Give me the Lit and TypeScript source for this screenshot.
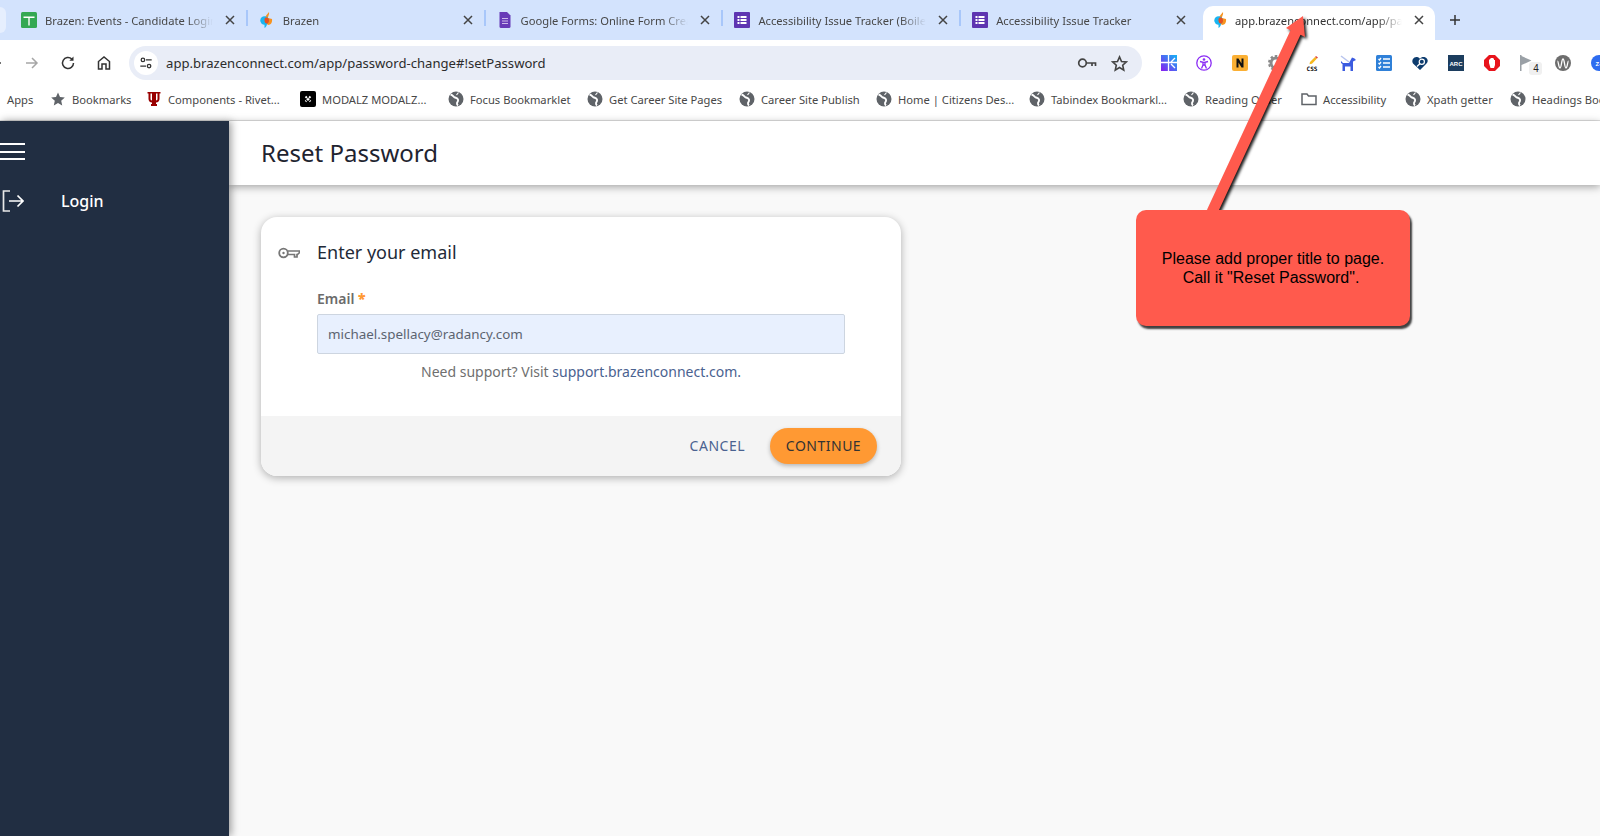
import { LitElement, css, html } from 'lit'
import { customElement } from 'lit/decorators.js'

const globe = html`<svg class="ico" viewBox="0 0 16 16"><circle cx="8" cy="8" r="7.500" fill="#5f6368"/><path d="M2.500 3.500C5 4 5.500 6 7 6.500s2.500.5 3 2-.5 2.500-1 3.500c-.2.800.2 1.800 1 2.500" fill="none" stroke="#fff" stroke-width="1.900"/><path d="M10.500 1.500 8.500 4" stroke="#fff" stroke-width="1.200"/></svg>`
const brazen = html`<svg class="ico" viewBox="0 0 16 16"><path d="M10 0c.5 3-1 3.500-1 6l4 1c.5 3-1 6-4 6L5 9c0-4 3-6 5-9Z" fill="#f7931e"/><circle cx="5.500" cy="8.500" r="4.200" fill="#19b5f1"/><path d="M6 6c2-1 4 0 4 2.500S8.500 12 7 11.500 5 7 6 6Z" fill="#e8501f"/><path d="M5.500 11c1 0 2 .5 2.500 1.500-.5 2-1.500 3-2.500 3.500Z" fill="#19b5f1"/></svg>`
const sheets = html`<svg class="ico" viewBox="0 0 16 16"><rect width="16" height="16" rx="1.500" fill="#34a853"/><path d="M2.500 4.500h11v1.400H8.700v7.600H7.300V5.900H2.500Z" fill="#fff"/></svg>`
const forms = html`<svg class="ico" viewBox="0 0 16 16"><path d="M2.500 0H10l3.500 3.500V14.500a1.500 1.500 0 0 1-1.500 1.500H4a1.500 1.500 0 0 1-1.500-1.500Z" fill="#673ab7"/><path d="M5 6.500h6M5 9h6M5 11.500h6" stroke="#cdb9ea" stroke-width="1.200"/></svg>`
const tracker = html`<svg class="ico" viewBox="0 0 16 16"><rect width="16" height="16" rx="1" fill="#5e35b1"/><path d="M3.500 4h2v2h-2ZM3.500 7h2v2h-2ZM3.500 10h2v2h-2ZM6.500 4h6v2h-6ZM6.500 7h6v2h-6ZM6.500 10h6v2h-6Z" fill="#fff"/></svg>`
const close = html`<svg class="close" viewBox="0 0 10 10"><path d="M1 1l8 8M9 1l-8 8" stroke="currentColor" stroke-width="1.500"/></svg>`

const tabs = [
  { icon: sheets, title: 'Brazen: Events - Candidate Login' },
  { icon: brazen, title: 'Brazen' },
  { icon: forms, title: 'Google Forms: Online Form Creator' },
  { icon: tracker, title: 'Accessibility Issue Tracker (Boilerplate)' },
  { icon: tracker, title: 'Accessibility Issue Tracker' },
]

const iu = html`<svg class="ico" viewBox="0 0 16 16"><path d="M1.500 1h4v1.500h-1V8c0 .8.500 1.300 1.500 1.400V2.500H5.500V1h5v1.500H10v6.900c1-.1 1.500-.6 1.500-1.400V2.500h-1V1h4v1.500h-1V8c0 2-1.300 3.300-3.500 3.500v1.500h1V15H5v-2h1v-1.500C3.800 11.300 2.500 10 2.500 8V2.500h-1Z" fill="#990000"/></svg>`
const modalz = html`<svg class="ico" viewBox="0 0 16 16"><rect width="16" height="16" rx="2" fill="#000"/><path d="M5.500 5.500l5 5M10.500 5.500l-5 5" stroke="#fff" stroke-width="2" stroke-dasharray="2 1"/></svg>`
const star = html`<svg class="ico" viewBox="0 0 16 16"><path d="M8 1.500l2 4.500 4.800.5-3.600 3.200 1 4.800L8 12.100 3.800 14.500l1-4.800L1.200 6.500 6 6Z" fill="#5f6368"/></svg>`
const folder = html`<svg class="ico" viewBox="0 0 16 16"><path d="M1 3h5l1.500 2H15v8.500H1Z" fill="none" stroke="#5f6368" stroke-width="1.500"/></svg>`

const bookmarks = [
  { width: 43, label: 'Apps' },
  { width: 96, icon: star, label: 'Bookmarks' },
  { width: 154, icon: iu, label: 'Components - Rivet...' },
  { width: 148, icon: modalz, label: 'MODALZ MODALZ...' },
  { width: 139, icon: globe, label: 'Focus Bookmarklet' },
  { width: 152, icon: globe, label: 'Get Career Site Pages' },
  { width: 137, icon: globe, label: 'Career Site Publish' },
  { width: 153, icon: globe, label: 'Home | Citizens Des...' },
  { width: 154, icon: globe, label: 'Tabindex Bookmarkl...' },
  { width: 118, icon: globe, label: 'Reading Order' },
  { width: 104, icon: folder, label: 'Accessibility' },
  { width: 105, icon: globe, label: 'Xpath getter' },
  { width: 120, icon: globe, label: 'Headings Bookmarklet' },
]

const extensions = [
  html`<svg viewBox="0 0 16 16"><defs><linearGradient id="g1" x1="0" y1="1" x2="1" y2="0"><stop offset="0" stop-color="#8a1df0"/><stop offset="1" stop-color="#12b5f5"/></linearGradient></defs><rect width="16" height="16" fill="url(#g1)"/><path d="M7.500 0v16M0 7.500h16M10 7l4-4M10 9l4 4" stroke="#fff" stroke-width="1.300"/></svg>`,
  html`<svg viewBox="0 0 16 16"><circle cx="8" cy="8" r="7.200" fill="#fff" stroke="#8b2cf5" stroke-width="1.300"/><circle cx="8" cy="4.500" r="1.300" fill="#8b2cf5"/><path d="M4 6.500l3 .8v2.700l-1.500 3.500M12 6.500l-3 .8v2.700l1.500 3.500M7 7.300h2V10H7Z" fill="none" stroke="#8b2cf5" stroke-width="1.300"/></svg>`,
  html`<svg viewBox="0 0 16 16"><rect width="16" height="16" rx="2" fill="#fbb034"/><path d="M4.500 12.500v-9h2l3 5v-5h2v9h-2l-3-5v5Z" fill="#111"/></svg>`,
  html`<svg viewBox="0 0 16 16"><circle cx="8" cy="8" r="5" fill="none" stroke="#8a8a8a" stroke-width="3"/><circle cx="8" cy="8" r="7" fill="none" stroke="#8a8a8a" stroke-width="2" stroke-dasharray="2.500 2"/></svg>`,
  html`<svg viewBox="0 0 16 16"><path d="M6 7l5-5 2 1.500-5 5.200-2.500.6Z" fill="#f5b81f"/><path d="M11 2l1-1 2 1.500-1 1Z" fill="#e0443e"/><text x="8" y="15.500" text-anchor="middle" class="css">CSS</text></svg>`,
  html`<svg viewBox="0 0 16 16"><path d="M1 1l8 6" stroke="#b8c4ee" stroke-width="1.500"/><path d="M1 6l2 2h6l3-5.500 2.500 1 1.500 1.500-3 1.500V16h-2.500v-4.500H5V16H2.500V9L1 8Z" fill="#3b5be0"/></svg>`,
  html`<svg viewBox="0 0 16 16"><rect width="16" height="16" rx="1.500" fill="#2f80d8"/><path d="M7 4h7M7 8h7M7 12h7M2.500 4l1 1 1.500-2M2.500 8l1 1 1.500-2M2.500 12l1 1 1.500-2" stroke="#fff" stroke-width="1.300" fill="none"/></svg>`,
  html`<svg viewBox="0 0 16 16"><path d="M8 15 1 8.500C-1 5 2 1.500 5 2c1.500.2 2.500 1 3 2 1-2 3.500-2.500 5.500-1.500 2.500 1.500 3 4 1 6Z" fill="#0d3c6e"/><circle cx="9.800" cy="6.800" r="2.600" fill="#0d3c6e" stroke="#fff" stroke-width="1.200"/><path d="M7.800 8.800 5 11.500" stroke="#fff" stroke-width="1.300"/></svg>`,
  html`<svg viewBox="0 0 16 16"><rect width="16" height="16" fill="#1c3d5e"/><text x="8" y="10.500" text-anchor="middle" class="arc">ARC</text></svg>`,
  html`<svg viewBox="0 0 16 16"><path d="M5 0h6l5 5v6l-5 5H5l-5-5V5Z" fill="#e8141c"/><path d="M5 8V4.500h1V3.500h1V3h2v.5h1V5h1v5l-1 3H6.500Z" fill="#fff"/></svg>`,
  html`<svg viewBox="0 0 16 16"><path d="M1 0h1.500v16H1ZM2.500 1l10 4.500-10 4.500Z" fill="#9aa0a6"/></svg><span class="ext-badge">4</span>`,
  html`<svg viewBox="0 0 16 16"><circle cx="8" cy="8" r="8" fill="#6d6d6d"/><path d="M2.500 6c1 0 1 7 2.500 7s1.500-9 3-9 1.500 9 3 9 1.500-7 2.500-7" fill="none" stroke="#fff" stroke-width="1.300"/></svg>`,
  html`<svg viewBox="0 0 16 16"><circle cx="8" cy="8" r="8" fill="#2d6cf0"/><text x="8" y="10.500" text-anchor="middle" class="arc">Z+</text></svg>`,
]

@customElement('app-root')
export class AppRoot extends LitElement {
  render() {
    return html`
      <div class="tabstrip">
        <div class="pill"></div>
        ${tabs.map((t) => html`
          <div class="tab">
            ${t.icon}
            <span class="tab-title">${t.title}</span>
            ${close}
          </div>
        `)}
        <div class="tab active">
          ${brazen}
          <span class="tab-title">app.brazenconnect.com/app/password-change</span>
          ${close}
        </div>
        <svg class="plus" viewBox="0 0 12 12"><path d="M6 1v10M1 6h10" stroke="#333" stroke-width="1.500"/></svg>
      </div>

      <div class="toolbar">
        <div class="nav">
          <svg viewBox="0 0 16 16"><path d="M14 8H3M8 3 3 8l5 5" fill="none" stroke="#444" stroke-width="1.500"/></svg>
        </div>
        <div class="nav">
          <svg viewBox="0 0 16 16"><path d="M2 8h11M8 3l5 5-5 5" fill="none" stroke="#a6a6a6" stroke-width="1.500"/></svg>
        </div>
        <div class="nav">
          <svg viewBox="0 0 16 16"><path d="M13.500 8A5.500 5.500 0 1 1 11.800 4" fill="none" stroke="#333" stroke-width="1.500"/><path d="M13.500 1.500v4.200H9.300Z" fill="#333"/></svg>
        </div>
        <div class="nav">
          <svg viewBox="0 0 16 16"><path d="M2.500 14V6.500L8 2l5.500 4.500V14H10V9H6v5Z" fill="none" stroke="#333" stroke-width="1.500"/></svg>
        </div>
        <div class="omnibox">
          <div class="site">
            <svg viewBox="0 0 16 16"><circle cx="4.500" cy="4.500" r="2" fill="none" stroke="#333" stroke-width="1.500"/><path d="M8 4.500h6.500M1.500 11.500H8" stroke="#333" stroke-width="1.500"/><circle cx="11.500" cy="11.500" r="2" fill="none" stroke="#333" stroke-width="1.500"/></svg>
          </div>
          <span class="url">app.brazenconnect.com/app/password-change#!setPassword</span>
          <svg class="omni-key" viewBox="0 0 20 12"><circle cx="5.500" cy="6" r="3.800" fill="none" stroke="#444" stroke-width="1.700"/><path d="M9 6h9.500v3M15 6v3" fill="none" stroke="#444" stroke-width="1.700"/></svg>
          <svg class="omni-star" viewBox="0 0 16 16"><path d="M8 1.800l1.900 4.300 4.600.4-3.500 3.100 1 4.600L8 11.800l-4 2.400 1-4.600L1.500 6.500l4.600-.4Z" fill="none" stroke="#444" stroke-width="1.500"/></svg>
        </div>
        <div class="extensions">
          ${extensions.map((e) => html`<div class="ext">${e}</div>`)}
        </div>
      </div>

      <div class="bookmarks">
        ${bookmarks.map((b) => html`
          <div class="bookmark" style="width:${b.width}px">
            ${b.icon ?? ''}
            <span>${b.label}</span>
          </div>
        `)}
      </div>

      <div class="app">
        <nav class="sidebar">
          <div class="burger"><span></span><span></span><span></span></div>
          <div class="nav-item">
            <svg viewBox="0 0 22 22"><path d="M8 1H1.500v20H8" fill="none" stroke="#e8e8e8" stroke-width="1.700"/><path d="M7 11h14M15.500 5.500 21 11l-5.500 5.500" fill="none" stroke="#fff" stroke-width="1.700"/></svg>
            <span>Login</span>
          </div>
        </nav>
        <main class="main">
          <header class="page-head"><h1>Reset Password</h1></header>
          <div class="content">
            <section class="card">
              <div class="card-body">
                <div class="card-title">
                  <svg viewBox="0 0 22 12"><circle cx="5.500" cy="6" r="4.300" fill="none" stroke="#777" stroke-width="1.800"/><circle cx="5.500" cy="6" r="1.200" fill="#777"/><path d="M10 4h11.500v1.500L19.500 7.500H19V10h-2.500V7.500H10" fill="none" stroke="#777" stroke-width="1.700"/></svg>
                  <h2>Enter your email</h2>
                </div>
                <div class="field">
                  <label for="email">Email <b>*</b></label>
                  <input id="email" type="text" value="michael.spellacy@radancy.com" />
                  <p class="help">Need support? Visit <a>support.brazenconnect.com.</a></p>
                </div>
              </div>
              <div class="card-foot">
                <button class="btn-cancel">CANCEL</button>
                <button class="btn-continue">CONTINUE</button>
              </div>
            </section>
          </div>
        </main>
      </div>

      <svg class="arrow" viewBox="0 0 1600 836">
        <path d="M1303 16 1305 37 1300.500 34.800 1217 214.300 1207 209.700 1290.500 30.200 1286 28Z" fill="#ff5a4d"/>
      </svg>
      <div class="callout"><span>Please add proper title to page.<br /><span class="nudge">Call it "Reset Password".</span></span></div>
    `
  }

  static styles = css`
    :host {
      display: block;
      position: relative;
      width: 1600px;
      height: 836px;
      overflow: hidden;
      background: #fff;
      font-family: "Noto Sans", sans-serif;
      color: #333;
    }

    .ico {
      width: 16px;
      height: 16px;
      flex: none;
    }

    /* tabs */
    .tabstrip {
      display: flex;
      align-items: flex-end;
      height: 40px;
      background: #d3e3fd;
    }

    .pill {
      width: 6px;
      height: 26px;
      margin: 0 4px 7px 0;
      background: #e6effe;
      border-radius: 0 8px 8px 0;
    }

    .tab {
      position: relative;
      display: flex;
      align-items: center;
      flex: none;
      box-sizing: border-box;
      width: 237.800px;
      height: 34px;
      padding: 0 13px 6px 11px;
      font-size: 11.200px;
      color: #474747;
    }

    .tab:not(.active):not(:nth-last-child(3))::after {
      content: '';
      position: absolute;
      right: 0;
      top: 4px;
      height: 16px;
      width: 2px;
      background: #a8c7fa;
    }

    .tab.active {
      width: 232px;
      margin-left: 4px;
      background: #fff;
      border-radius: 10px 10px 0 0;
      color: #333;
      padding: 0 11px 6px 10px;
    }

    .tab.active .tab-title {
      margin-left: 6px;
    }

    .tab-title {
      flex: 1;
      margin: 0 12px 0 8px;
      white-space: nowrap;
      overflow: hidden;
      -webkit-mask-image: linear-gradient(to right, #000 85%, transparent);
      mask-image: linear-gradient(to right, #000 85%, transparent);
    }

    .close {
      width: 10px;
      height: 10px;
      flex: none;
      color: #444;
    }

    .plus {
      width: 12px;
      height: 12px;
      margin: 0 0 14px 14px;
    }

    /* toolbar */
    .toolbar {
      display: flex;
      align-items: flex-start;
      box-sizing: border-box;
      height: 46px;
      padding-top: 6px;
      margin-left: -23px;
      width: 1640px;
    }

    .nav {
      display: flex;
      align-items: center;
      justify-content: center;
      flex: none;
      width: 36.400px;
      height: 34px;
    }

    .nav svg {
      width: 16px;
      height: 16px;
    }

    .omnibox {
      display: flex;
      align-items: center;
      flex: none;
      box-sizing: border-box;
      width: 1013px;
      height: 34px;
      margin-left: 6.500px;
      padding: 0 14px 0 5px;
      background: #e9edf7;
      border-radius: 17px;
    }

    .site {
      display: flex;
      align-items: center;
      justify-content: center;
      width: 24px;
      height: 24px;
      border-radius: 50%;
      background: #fff;
    }

    .site svg {
      width: 14px;
      height: 14px;
    }

    .url {
      flex: 1;
      margin-left: 8px;
      font-size: 13.100px;
      color: #2c2c2c;
    }

    .omni-key {
      width: 20px;
      height: 12px;
      margin-right: 14px;
    }

    .omni-star {
      width: 17px;
      height: 17px;
    }

    .extensions {
      display: flex;
      align-items: center;
      height: 34px;
      margin-left: 8.500px;
    }

    .ext {
      position: relative;
      display: flex;
      align-items: center;
      justify-content: center;
      flex: none;
      width: 35.900px;
      height: 24px;
    }

    .ext svg {
      width: 16px;
      height: 16px;
      overflow: visible;
    }

    .ext .css {
      font: bold 6px "DejaVu Sans Mono", monospace;
      fill: #000;
    }

    .ext .arc {
      font: bold 6px "Liberation Sans", sans-serif;
      fill: #fff;
    }

    .ext-badge {
      position: absolute;
      left: 20px;
      top: 11px;
      width: 13px;
      height: 13px;
      border-radius: 3px;
      background: #f0f0f0;
      font: 10px/13px "Liberation Sans", sans-serif;
      text-align: center;
      color: #222;
    }

    /* bookmarks */
    .bookmarks {
      display: flex;
      align-items: center;
      box-sizing: border-box;
      height: 35px;
      padding: 0 0 8px 7px;
      border-bottom: 1px solid #e0e0e0;
      font-size: 11.200px;
      color: #474747;
    }

    .bookmark {
      display: flex;
      align-items: center;
      flex: none;
      gap: 6px;
      white-space: nowrap;
    }

    /* page */
    .app {
      display: flex;
      height: 715px;
    }

    .sidebar {
      position: relative;
      z-index: 2;
      flex: none;
      width: 229px;
      background: #212e42;
      box-shadow: 2px 0 8px rgba(0, 0, 0, 0.4);
      color: #fff;
    }

    .burger {
      display: flex;
      flex-direction: column;
      gap: 5.500px;
      width: 25px;
      padding-top: 22px;
    }

    .burger span {
      height: 2px;
      background: #fff;
    }

    .nav-item {
      display: flex;
      align-items: center;
      height: 22px;
      margin-top: 30px;
      padding-left: 2px;
      font-size: 16px;
      font-weight: 500;
    }

    .nav-item svg {
      width: 22px;
      height: 22px;
      margin-right: 37px;
    }

    .main {
      flex: 1;
      background: #f9f9f9;
    }

    .page-head {
      position: relative;
      display: flex;
      align-items: center;
      box-sizing: border-box;
      height: 64px;
      padding: 0 0 2px 32px;
      background: #fff;
      box-shadow: 0 2px 8px rgba(0, 0, 0, 0.35);
    }

    h1 {
      margin: 0;
      font-size: 24px;
      font-weight: 400;
      color: #1f2430;
    }

    .content {
      padding: 32px;
    }

    .card {
      display: flex;
      flex-direction: column;
      width: 640px;
      height: 259px;
      overflow: hidden;
      border-radius: 16px;
      background: #fff;
      box-shadow: 0 2px 8px rgba(0, 0, 0, 0.3);
    }

    .card-body {
      flex: 1;
      padding-top: 21px;
    }

    .card-title {
      display: flex;
      align-items: center;
      height: 28px;
      padding-left: 17px;
    }

    .card-title svg {
      width: 22px;
      height: 12px;
      margin: 2px 17px 0 0;
    }

    h2 {
      margin: 0;
      font-size: 18px;
      font-weight: 400;
      color: #222a38;
    }

    .field {
      padding: 23px 56px 0 56px;
    }

    label {
      display: block;
      font-size: 14px;
      font-weight: 600;
      line-height: 20px;
      color: #6b6b6b;
    }

    label b {
      color: #ff9933;
    }

    input {
      display: block;
      box-sizing: border-box;
      width: 100%;
      height: 40px;
      margin-top: 5px;
      padding: 0 10px;
      border: 1px solid #cdd5e0;
      border-radius: 2px;
      background: #e8f0fe;
      font: 13.400px "Noto Sans", sans-serif;
      color: #5c6470;
      outline: none;
    }

    .help {
      margin: 8px 0 0;
      font-size: 14px;
      line-height: 20px;
      text-align: center;
      color: #6f6f6f;
    }

    .help a {
      color: #4a6290;
    }

    .card-foot {
      display: flex;
      align-items: center;
      justify-content: flex-end;
      gap: 25px;
      height: 60px;
      padding-right: 24px;
      background: #f4f4f4;
    }

    button {
      border: none;
      padding: 0 0 2px;
      font: 14px "Noto Sans", sans-serif;
      letter-spacing: 0.500px;
    }

    .btn-cancel {
      background: none;
      color: #4a6290;
    }

    .btn-continue {
      width: 107px;
      height: 36px;
      border-radius: 18px;
      background: #ff9933;
      color: #333;
      box-shadow: 0 2px 4px rgba(0, 0, 0, 0.25);
    }

    /* annotation laid over the screenshot */
    .arrow {
      position: absolute;
      inset: 0;
      z-index: 5;
      width: 1600px;
      height: 836px;
      pointer-events: none;
      filter: drop-shadow(2px 2px 1.500px rgba(0, 0, 0, 0.9));
    }

    .callout {
      position: absolute;
      z-index: 6;
      left: 1136px;
      top: 210px;
      display: flex;
      align-items: center;
      justify-content: center;
      box-sizing: border-box;
      width: 274px;
      height: 116px;
      padding-top: 1px;
      border-radius: 10px;
      background: #ff5a4d;
      box-shadow: 2px 3px 2px rgba(0, 0, 0, 0.75);
      font: 16px/18.500px "Liberation Sans", Arial, sans-serif;
      text-align: center;
      color: #000;
    }

    .nudge {
      padding-right: 4px;
    }
  `
}

declare global {
  interface HTMLElementTagNameMap {
    'app-root': AppRoot
  }
}
